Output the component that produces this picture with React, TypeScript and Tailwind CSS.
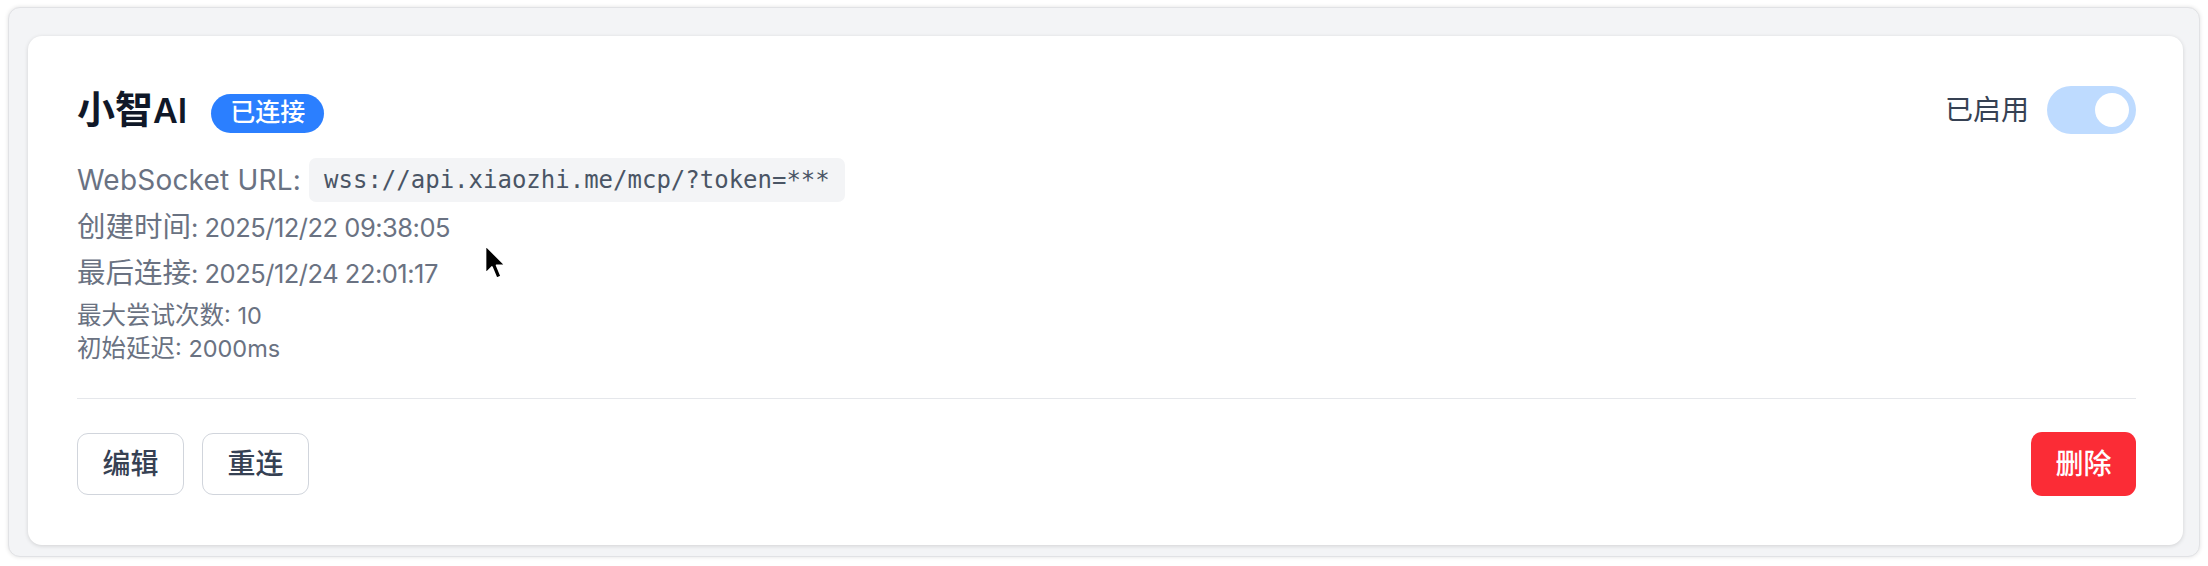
import React from "react";

function Cursor() {
  return (
    <svg
      className="absolute left-[483px] top-[243px]"
      width="26"
      height="40"
      viewBox="0 0 22 34"
    >
      <path
        d="M2 2 L2 26 L7.5 20.5 L11.5 30 L15.5 28.3 L11.6 19 L19 19 Z"
        fill="#000"
        stroke="#fff"
        strokeWidth="1.6"
        strokeLinejoin="round"
      />
    </svg>
  );
}

export default function App() {
  return (
    <div
      className="relative min-h-[566px] w-[2208px] bg-white pl-[8px] pr-[8px] pt-[7px]"
      style={{ fontFamily: 'Inter, "Noto Sans CJK SC", sans-serif' }}
    >
      <div className="rounded-[12px] border border-[#e1e2e5] bg-[#f3f4f6] pb-[11px] pl-[19px] pr-[16px] pt-[28px] shadow-[0_0_4px_rgba(0,0,0,0.12)]">
        <div className="flex flex-col rounded-[14px] bg-white pb-[49px] pl-[49px] pr-[47px] pt-[54px] shadow-[0_1px_4px_rgba(0,0,0,0.14)]">
          {/* header */}
          <div className="flex shrink-0 items-start justify-between">
            <div className="flex h-[46px] items-center">
              <span className="font-semibold leading-[46px] text-[#101828]">
                <span className="text-[38px]">小智</span>
                <span className="text-[34px]">AI</span>
              </span>
              <span className="ml-[24px] flex h-[39px] items-center rounded-full bg-[#2b7fff] px-[19px] text-[25px] font-medium text-white">
                已连接
              </span>
            </div>
            <div className="mt-[-4px] flex h-[48px] items-center gap-[18px]">
              <span className="text-[28px] text-[#364153]">已启用</span>
              <div className="flex h-[48px] w-[89px] items-center justify-end rounded-full bg-[#bedbff] pr-[7px]">
                <div className="h-[34px] w-[34px] rounded-full bg-white" />
              </div>
            </div>
          </div>

          {/* info rows */}
          <div className="mt-[22px] flex h-[44px] shrink-0 items-center text-[#6a7282]">
            <span className="text-[28px] tracking-[0.2px]">WebSocket URL:</span>
            <span
              className="ml-[8px] flex h-[44px] items-center rounded-[7px] bg-[#f3f4f6] px-[15px] text-[24px] text-[#4a5565]"
              style={{ fontFamily: '"DejaVu Sans Mono", monospace' }}
            >
              wss://api.xiaozhi.me/mcp/?token=***
            </span>
          </div>
          <div className="mt-[7px] h-[36px] shrink-0 text-[25.5px] leading-[36px] tracking-[-0.5px] text-[#6a7282]">
            <span className="text-[28.5px] tracking-normal">创建时间</span>: 2025/12/22 09:38:05
          </div>
          <div className="mt-[10px] h-[36px] shrink-0 text-[25.5px] leading-[36px] tracking-[-0.5px] text-[#6a7282]">
            <span className="text-[28.5px] tracking-normal">最后连接</span>: 2025/12/24 22:01:17
          </div>
          <div className="mt-[8px] shrink-0 text-[23.5px] leading-[33px] text-[#6a7282]">
            <div className="h-[33px]">
              <span className="text-[24.5px]">最大尝试次数</span>: 10
            </div>
            <div className="h-[33px]">
              <span className="text-[24.5px]">初始延迟</span>: 2000ms
            </div>
          </div>

          <div className="mt-[33px] h-px shrink-0 bg-[#e5e7eb]" />

          <div className="mt-[33px] flex h-[64px] shrink-0 items-center justify-between">
            <div className="flex gap-[18px]">
              <button className="flex h-[62px] w-[107px] items-center justify-center rounded-[11px] border-[1.5px] border-[#d1d5dc] bg-white text-[28px] font-medium text-[#364153]">
                编辑
              </button>
              <button className="flex h-[62px] w-[107px] items-center justify-center rounded-[11px] border-[1.5px] border-[#d1d5dc] bg-white text-[28px] font-medium text-[#364153]">
                重连
              </button>
            </div>
            <button className="flex h-[64px] w-[105px] items-center justify-center rounded-[11px] bg-[#fb2c36] text-[28px] font-medium text-white">
              删除
            </button>
          </div>
        </div>
      </div>
      <Cursor />
    </div>
  );
}
